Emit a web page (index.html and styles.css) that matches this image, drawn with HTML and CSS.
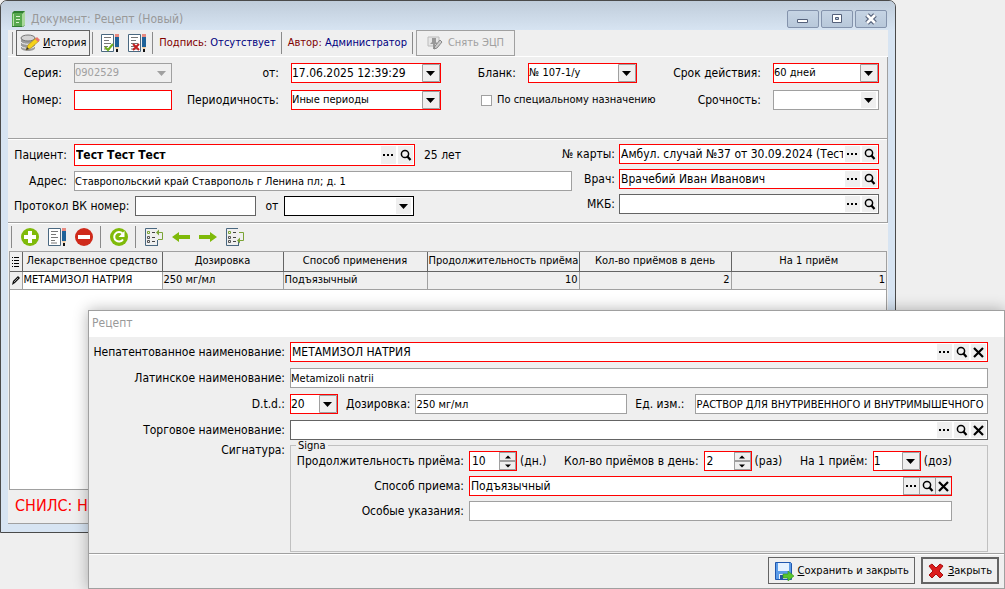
FILE: index.html
```html
<!DOCTYPE html>
<html lang="ru">
<head>
  <meta charset="UTF-8" />
  <meta name="viewport" content="width=device-width, initial-scale=1.0" />
  <title>Документ: Рецепт (Новый)</title>
  <link rel="stylesheet" href="styles.css">
</head>
<body>
  <svg class="sprite" aria-hidden="true">
    <symbol id="i-dots" viewBox="0 0 15 16"><path d="M2 7h2v2H2zM6 7h2v2H6zM10 7h2v2h-2z"/></symbol>
    <symbol id="i-search" viewBox="0 0 15 16"><circle cx="7" cy="7" r="3.6" fill="none" stroke="#000" stroke-width="1.5"/><path d="M9 9l3.500 4" stroke="#000" stroke-width="2.2"/></symbol>
    <symbol id="i-clear" viewBox="0 0 15 16"><path d="M3 4l9 9M12 4l-9 9" stroke="#000" stroke-width="2.2"/></symbol>
    <symbol id="i-up" viewBox="0 0 14 8"><path d="M4 5.500h6l-3-3z"/></symbol>
    <symbol id="i-down" viewBox="0 0 14 8"><path d="M4 2.500h6l-3 3z"/></symbol>
    <symbol id="i-page" viewBox="0 0 20 20">
      <path d="M1.500 1.500h12v17h-12z" fill="#fff" stroke="#4a6880"/>
      <path d="M4 4.500h7M4 7.500h5M4 10.500h7M4 13.500h4M4 16h6" stroke="#777"/>
      <path d="M15 4h4v10h-4z" fill="#1f6299"/><path d="M15 1h4v3h-4z" fill="#e88a80"/>
      <path d="M15 14h4l-1 2h-2z" fill="#f3cfa5"/><path d="M16 16h2v3h-2z" fill="#111"/>
    </symbol>
    <symbol id="i-tree" viewBox="0 0 20 20">
      <path d="M13 1.500H1.500v17H13" fill="none" stroke="#4a6880"/>
      <path d="M13.500 13v6" stroke="#4a6880"/>
      <path d="M3.500 4.500h2v2h-2z" fill="none" stroke="#7ba436"/>
      <path d="M3.500 9.500h2v2h-2zM3.500 13.500h2v2h-2z" fill="none" stroke="#555"/>
      <path d="M8 5.500h3M8 10.500h3M8 14.500h3" stroke="#444"/>
    </symbol>
    <symbol id="i-arrow" viewBox="0 0 20 14"><path d="M1 7l7-5v3h11v4H8v3z" fill="#7fba0a"/></symbol>
  </svg>

  <main class="window">
    <header class="titlebar">
      <svg class="book" width="15" height="16" viewBox="0 0 15 16"><path d="M1 2l2-2h11v14l-2 2H1z" fill="#2f7d32"/><path d="M1 2h10v13H1z" fill="#57a84f"/><path d="M11 3l3-3v14l-3 2z" fill="#a9d89c"/><path d="M5 5.500h4M5 8.500h4M5 11.500h3" stroke="#d8f2cf"/><path d="M2.500 3v12" stroke="#b2dfa6"/></svg>
      <h1>Документ: Рецепт (Новый)</h1>
      <div class="window-buttons">
        <button aria-label="Свернуть"><svg width="14" height="12" viewBox="0 0 14 12"><path d="M1.500 6.500h10v3h-10z" fill="#fff" stroke="#54607a"/></svg></button>
        <button aria-label="Развернуть"><svg width="14" height="12" viewBox="0 0 14 12"><path d="M2.500 1.500h9v8h-9z" fill="#fff" stroke="#54607a"/><path d="M5.500 4.500h3v2h-3z" fill="#b6c7da" stroke="#54607a"/></svg></button>
        <button aria-label="Закрыть окно"><svg width="14" height="12" viewBox="0 0 14 12"><path d="M3 2l8 8M11 2l-8 8" stroke="#54607a" stroke-width="5"/><path d="M3 2l8 8M11 2l-8 8" stroke="#fff" stroke-width="2.6"/></svg></button>
      </div>
    </header>

    <div class="client">
      <div class="toolbar">
        <i class="sep"></i>
        <button class="tool history">
          <svg width="20" height="18" viewBox="0 0 20 18"><path d="M1 4v10c0 4 14 4 14 0V4z" fill="#9b9b9b"/><path d="M1 8c1 3 13 3 14 0M1 12c1 3 13 3 14 0" fill="none" stroke="#f4f4f4"/><ellipse cx="8" cy="4" rx="7" ry="3" fill="#d4d4d4" stroke="#777"/><path d="M6 16l2-5 8-7 3 3-8 7z" fill="#f5d21a" stroke="#a98318" stroke-width=".6"/><path d="M15 5l2-2 3 3-2 2z" fill="#e9756b"/><path d="M6 16l1-3 2 2z" fill="#333"/></svg>
          <span><u>И</u>стория</span>
        </button>
        <i class="sep"></i>
        <button class="icon-btn" aria-label="Подписать"><svg width="20" height="20"><use href="#i-page"/><path d="M5 14l3 3 5-6" fill="none" stroke="#6fae1d" stroke-width="2"/></svg></button>
        <button class="icon-btn" aria-label="Снять подпись"><svg width="20" height="20"><use href="#i-page"/><path d="M6 11l6 6M12 11l-6 6" stroke="#c21f1f" stroke-width="2"/></svg></button>
        <i class="sep"></i>
        <span class="status"><b>Подпись:</b> Отсутствует</span>
        <i class="sep"></i>
        <span class="status"><b>Автор:</b> Администратор</span>
        <i class="sep"></i>
        <button class="tool unsign" disabled>
          <svg width="16" height="16" viewBox="0 0 16 16"><path d="M1 2h11v9H1z" fill="#e6e6e6" stroke="#bbb"/><path d="M5 3h4v4l2 2H3l2-2zM6 9h2v5H6z" fill="#999"/><path d="M7 14l1-3 5-6 2 2-5 6z" fill="#ccc" stroke="#888"/></svg>
          <span>Снять ЭЦП</span>
        </button>
      </div>

      <section class="panel document">
        <label for="series">Серия:</label>
        <select id="series" class="combo" disabled><option>0902529</option></select>
        <label for="date">от:</label>
        <select id="date" class="combo boxed required large"><option>17.06.2025 12:39:29</option></select>
        <label for="blank">Бланк:</label>
        <select id="blank" class="combo boxed required"><option>№ 107-1/у</option></select>
        <label for="term">Срок действия:</label>
        <select id="term" class="combo boxed required"><option>60 дней</option></select>

        <label for="number">Номер:</label>
        <input id="number" class="required" type="text">
        <label for="period">Периодичность:</label>
        <select id="period" class="combo boxed required"><option>Иные периоды</option></select>
        <label class="check"><input type="checkbox"> По специальному назначению</label>
        <label class="urgency" for="urgency">Срочность:</label>
        <select id="urgency" class="combo"><option></option></select>
      </section>

      <section class="panel patient">
        <div class="patient-left">
          <div class="line">
            <label class="short" for="patient">Пациент:</label>
            <div class="lookup required patient-name">
              <input id="patient" type="text" value="Тест Тест Тест">
              <button aria-label="Выбрать пациента"><svg><use href="#i-dots"/></svg></button>
              <button aria-label="Найти пациента"><svg><use href="#i-search"/></svg></button>
            </div>
            <span class="age">25 лет</span>
          </div>
          <div class="line">
            <label class="short" for="address">Адрес:</label>
            <input id="address" class="grow" type="text" value="Ставропольский край Ставрополь г Ленина пл; д. 1">
          </div>
          <div class="line protocol">
            <label for="protocol">Протокол ВК номер:</label>
            <input id="protocol" class="dark" type="text">
            <label for="protocol-date">от</label>
            <select id="protocol-date" class="combo black"><option></option></select>
          </div>
        </div>
        <div class="patient-right">
          <label for="card">№ карты:</label>
          <div class="lookup required">
            <input id="card" type="text" value="Амбул. случай №37 от 30.09.2024 (Тест)">
            <button aria-label="Выбрать карту"><svg><use href="#i-dots"/></svg></button>
            <button aria-label="Найти карту"><svg><use href="#i-search"/></svg></button>
          </div>
          <label for="doctor">Врач:</label>
          <div class="lookup required">
            <input id="doctor" type="text" value="Врачебий Иван Иванович">
            <button aria-label="Выбрать врача"><svg><use href="#i-dots"/></svg></button>
            <button aria-label="Найти врача"><svg><use href="#i-search"/></svg></button>
          </div>
          <label for="mkb">МКБ:</label>
          <div class="lookup dark">
            <input id="mkb" type="text">
            <button aria-label="Выбрать МКБ"><svg><use href="#i-dots"/></svg></button>
            <button aria-label="Найти МКБ"><svg><use href="#i-search"/></svg></button>
          </div>
        </div>
      </section>

      <div class="toolbar grid-tools">
        <i class="sep"></i>
        <button class="icon-btn" aria-label="Добавить"><svg width="20" height="20"><circle cx="10" cy="10" r="9" fill="#7fba0a"/><path d="M10 4v12M4 10h12" stroke="#fff" stroke-width="4"/></svg></button>
        <button class="icon-btn" aria-label="Изменить"><svg width="20" height="20"><use href="#i-page"/></svg></button>
        <button class="icon-btn" aria-label="Удалить"><svg width="20" height="20"><circle cx="10" cy="10" r="9" fill="#cf2a1b"/><path d="M4 10h12" stroke="#fff" stroke-width="4"/></svg></button>
        <i class="sep"></i>
        <button class="icon-btn" aria-label="Обновить"><svg width="20" height="20"><circle cx="10" cy="10" r="9" fill="#7fba0a"/><path d="M14 12.500a4.800 4.800 0 1 1-.5-6" fill="none" stroke="#fff" stroke-width="2"/><path d="M15.500 4v6h-6z" fill="#fff"/></svg></button>
        <i class="sep"></i>
        <button class="icon-btn" aria-label="Первая запись"><svg width="20" height="20"><use href="#i-tree"/><path d="M14 12.500h4.500v-7H14" fill="none" stroke="#7ba436"/><path d="M12 5.500l3-3v6z" fill="#7ba436"/></svg></button>
        <button class="icon-btn" aria-label="Предыдущая запись"><svg width="20" height="14"><use href="#i-arrow"/></svg></button>
        <button class="icon-btn" aria-label="Следующая запись"><svg class="flip" width="20" height="14"><use href="#i-arrow"/></svg></button>
        <button class="icon-btn" aria-label="Последняя запись"><svg width="20" height="20"><use href="#i-tree"/><path d="M14 5.500h4.500v8H14" fill="none" stroke="#7ba436"/><path d="M12 13.500l3-3v6z" fill="#7ba436"/></svg></button>
      </div>

      <div class="table-box">
        <table>
          <colgroup><col class="c-mark"><col class="c-name"><col class="c-dose"><col class="c-way"><col class="c-days"><col class="c-days"><col></colgroup>
          <thead>
            <tr>
              <th><svg width="9" height="13" viewBox="0 0 9 13"><path d="M1 2.500h1M3 2.500h5M1 5.500h1M3 5.500h5M1 8.500h1M3 8.500h5M1 11.500h1M3 11.500h5" stroke="#000"/></svg></th>
              <th>Лекарственное средство</th>
              <th>Дозировка</th>
              <th>Способ применения</th>
              <th>Продолжительность приёма</th>
              <th>Кол-во приёмов в день</th>
              <th>На 1 приём</th>
            </tr>
          </thead>
          <tbody>
            <tr>
              <td class="mark"><svg width="10" height="11" viewBox="0 0 10 11"><path d="M1 10l1-4 5-5 2 2-5 5z" fill="#111"/><path d="M3 7l4-4" stroke="#999"/></svg></td>
              <td class="current">МЕТАМИЗОЛ НАТРИЯ</td>
              <td>250 мг/мл</td>
              <td>Подъязычный</td>
              <td class="num">10</td>
              <td class="num">2</td>
              <td class="num">1</td>
            </tr>
          </tbody>
        </table>
      </div>
      <footer class="snils">СНИЛС: Н</footer>
    </div>
  </main>

  <section class="dialog" role="dialog" aria-labelledby="dialog-title">
    <h2 id="dialog-title">Рецепт</h2>
    <div class="form">
      <label for="inn">Непатентованное наименование:</label>
      <div class="lookup required">
        <input id="inn" type="text" value="МЕТАМИЗОЛ НАТРИЯ">
        <button aria-label="Выбрать наименование"><svg><use href="#i-dots"/></svg></button>
        <button aria-label="Найти наименование"><svg><use href="#i-search"/></svg></button>
        <button aria-label="Очистить наименование"><svg><use href="#i-clear"/></svg></button>
      </div>

      <label for="latin">Латинское наименование:</label>
      <input id="latin" type="text" value="Metamizoli natrii">

      <label for="dtd">D.t.d.:</label>
      <div class="line dose-line">
        <select id="dtd" class="combo boxed required large count"><option>20</option></select>
        <label for="dose">Дозировка:</label>
        <input id="dose" type="text" value="250 мг/мл">
        <label for="unit">Ед. изм.:</label>
        <input id="unit" type="text" value="РАСТВОР ДЛЯ ВНУТРИВЕННОГО И ВНУТРИМЫШЕЧНОГО ВВЕДЕНИЯ">
      </div>

      <label for="trade">Торговое наименование:</label>
      <div class="lookup dark">
        <input id="trade" type="text">
        <button aria-label="Выбрать торговое наименование"><svg><use href="#i-dots"/></svg></button>
        <button aria-label="Найти торговое наименование"><svg><use href="#i-search"/></svg></button>
        <button aria-label="Очистить торговое наименование"><svg><use href="#i-clear"/></svg></button>
      </div>

      <span class="caption">Сигнатура:</span>
      <fieldset>
        <legend>Signa</legend>
        <div class="signa">
          <label for="days">Продолжительность приёма:</label>
          <div class="line">
            <div class="spin required">
              <input id="days" type="text" value="10">
              <span><button aria-label="Больше дней"><svg><use href="#i-up"/></svg></button><button aria-label="Меньше дней"><svg><use href="#i-down"/></svg></button></span>
            </div>
            <span class="unit">(дн.)</span>
            <label for="times">Кол-во приёмов в день:</label>
            <div class="spin required">
              <input id="times" type="text" value="2">
              <span><button aria-label="Больше раз"><svg><use href="#i-up"/></svg></button><button aria-label="Меньше раз"><svg><use href="#i-down"/></svg></button></span>
            </div>
            <span class="unit">(раз)</span>
            <label for="once">На 1 приём:</label>
            <select id="once" class="combo boxed required large count"><option>1</option></select>
            <span class="unit">(доз)</span>
          </div>

          <label for="way">Способ приема:</label>
          <div class="lookup required framed">
            <input id="way" type="text" value="Подъязычный">
            <button aria-label="Выбрать способ"><svg><use href="#i-dots"/></svg></button>
            <button aria-label="Найти способ"><svg><use href="#i-search"/></svg></button>
            <button aria-label="Очистить способ"><svg><use href="#i-clear"/></svg></button>
          </div>

          <label for="notes">Особые указания:</label>
          <input id="notes" type="text">
        </div>
      </fieldset>
    </div>
    <footer class="actions">
      <button class="save">
        <svg width="20" height="20" viewBox="0 0 20 20"><path d="M1.500 1.500h15l1 1v16h-16z" fill="#5b9be8" stroke="#1f56ad"/><path d="M4 2h11v8H4z" fill="#e4f1ff"/><path d="M5 13h8v5H5z" fill="#e8ecf1"/><path d="M6 14h3v4H6z" fill="#24559f"/><path d="M9 13h5v-3l6 5-6 5v-3H9z" fill="#58c52f" stroke="#319417" stroke-width=".6"/></svg>
        <span><u>С</u>охранить и закрыть</span>
      </button>
      <button class="close">
        <svg width="16" height="16" viewBox="0 0 16 16"><path d="M1 3l3-2 4 4 4-4 3 2-4 5 4 4-3 3-4-4-4 4-3-3 4-4z" fill="#dc1c1c" stroke="#a80e0e"/></svg>
        <span><u>З</u>акрыть</span>
      </button>
    </footer>
  </section>
</body>
</html>
```

FILE: styles.css
```css
* {
  box-sizing: border-box;
}

body {
  margin: 0;
  height: 100vh;
  overflow: hidden;
  position: relative;
  background: #efefef;
  color: #000;
  font-family: "DejaVu Sans Condensed", Tahoma, sans-serif;
  font-size: 12px;
  line-height: 16px;
}

h1, h2 {
  margin: 0;
  font-size: 12px;
  font-weight: normal;
  color: #999;
}

.sprite {
  display: none;
}

button, input, select {
  font: inherit;
  color: inherit;
  margin: 0;
  border-radius: 0;
}

button {
  padding: 0;
  border: none;
  background: #efefef;
  display: flex;
  align-items: center;
  justify-content: center;
}

label {
  white-space: nowrap;
}

/* windows */

.window {
  position: absolute;
  inset: 0 109px 56px 0;
  display: flex;
  flex-direction: column;
  padding: 0 7px 8px;
  background: #d7e4f2;
  border: 1px solid #4a4a4a;
  border-radius: 7px 7px 0 0;
}

.titlebar {
  display: flex;
  align-items: center;
  height: 29px;
  margin: 0 -7px;
  padding: 6px 8px 0 10px;
  gap: 5px;
  flex: none;
  border-radius: 6px 6px 0 0;
  background: linear-gradient(#bfccda, #d7e4f2);
}

.window-buttons {
  display: flex;
  gap: 2px;
  margin-left: auto;
}

.window-buttons button {
  width: 32px;
  height: 18px;
  border: 1px solid #8493ac;
  border-radius: 2px;
  background: linear-gradient(#c6d4e4, #b8c8da);
}

.client {
  flex: 1;
  display: flex;
  flex-direction: column;
  background: #efefef;
  min-height: 0;
}

.toolbar {
  display: flex;
  align-items: center;
  height: 27px;
  padding-left: 2px;
  border-bottom: 1px solid #fff;
  flex: none;
  font-size: 11px;
}

.sep {
  width: 1px;
  height: 22px;
  margin: 0 3px 0 2px;
  background: #8a8a8a;
}

.tool {
  height: 26px;
  gap: 3px;
  padding: 0 3px;
  border: 1px solid #646464;
}

.unsign {
  gap: 5px;
  padding: 0 10px;
  color: #a0a0a0;
  border-color: #a0a0a0;
}

.icon-btn {
  width: 27px;
  height: 22px;
}

.icon-btn svg {
  flex: none;
}

.flip {
  transform: scaleX(-1);
}

.status {
  padding: 0 3px;
  color: #000080;
}

.status b {
  font-weight: normal;
  color: #800000;
}

/* fields */

input[type="text"], .combo, .lookup, .spin {
  height: 20px;
  min-width: 0;
  padding: 0;
  background-color: #fff;
  border: 1px solid #a0a0a0;
  font-size: 11px;
}

.combo {
  appearance: none;
  padding: 0 18px 0 0;
  opacity: 1;
  background-repeat: no-repeat;
  background-position: right center;
  background-image: url("data:image/svg+xml,%3Csvg xmlns='http://www.w3.org/2000/svg' width='18' height='18'%3E%3Cpath d='M1 1h15v16H1z' fill='%23efefef'/%3E%3Cpath d='M4 7h9l-4.500 5z'/%3E%3C/svg%3E");
}

.combo.boxed {
  background-image: url("data:image/svg+xml,%3Csvg xmlns='http://www.w3.org/2000/svg' width='18' height='18'%3E%3Cpath d='M.5.5h17v17H.5z' fill='%23efefef' stroke='%23a0a0a0'/%3E%3Cpath d='M4 7h9l-4.500 5z'/%3E%3C/svg%3E");
}

.combo:disabled {
  color: #a0a0a0;
  background-color: #efefef;
  background-image: url("data:image/svg+xml,%3Csvg xmlns='http://www.w3.org/2000/svg' width='18' height='18'%3E%3Cpath d='M4 7h9l-4.500 5z' fill='%23a0a0a0'/%3E%3C/svg%3E");
}

.combo.large {
  font-size: 12px;
}

.lookup {
  display: flex;
  gap: 2px;
  padding: 1px;
  font-size: 12px;
}

.lookup input[type="text"], .spin input[type="text"] {
  flex: 1;
  height: auto;
  border: none;
  font-size: 12px;
}

.lookup button {
  width: 15px;
  flex: none;
}

.lookup svg {
  width: 15px;
  height: 16px;
}

.lookup.framed {
  gap: 0;
  padding: 0 0 0 1px;
}

.framed button {
  width: 16px;
  border: 1px solid #a0a0a0;
  border-right: none;
}

.spin {
  display: flex;
  width: 48px;
  padding: 0 0 0 2px;
}

.spin span {
  display: flex;
  flex-direction: column;
  width: 17px;
}

.spin button {
  height: 9px;
  border: 1px solid #a0a0a0;
}

.spin svg {
  width: 14px;
  height: 8px;
  flex: none;
}

input[type="text"].dark, .dark {
  border-color: #646464;
}

.combo.black {
  border-color: #000;
}

input[type="text"].required, .combo.required, .required {
  border-color: #f00;
}

.line {
  display: flex;
  align-items: center;
}

/* document panels */

.panel {
  border-bottom: 1px solid #a0a0a0;
  border-right: 1px solid #a0a0a0;
  box-shadow: 0 1px #fff;
}

.document {
  display: grid;
  grid-template-columns: 54px 98px 95px 150px 63px 109px 1fr 106px;
  gap: 7px 12px;
  align-items: center;
  padding: 6px 8px 28px 0;
}

.document > label {
  text-align: right;
}

.document .check {
  grid-column: 5 / 7;
  display: flex;
  align-items: center;
  gap: 5px;
  padding-left: 28px;
  font-size: 11px;
}

.check input {
  appearance: none;
  width: 11px;
  height: 11px;
  flex: none;
  background: #fff;
  border: 1px solid #a0a0a0;
}

.patient {
  display: flex;
  padding: 5px 8px 6px 6px;
}

.patient-left {
  flex: 1;
  display: flex;
  flex-direction: column;
  gap: 5px;
}

.short {
  width: 53px;
  margin-right: 7px;
  text-align: right;
}

.patient-name {
  height: 22px;
  width: 341px;
}

.patient-name input[type="text"] {
  font-weight: bold;
}

.age {
  margin-left: 9px;
}

.grow {
  flex: 1;
}

.protocol label + input {
  width: 121px;
  margin: 0 9px 0 6px;
}

.protocol .combo {
  width: 130px;
  margin-left: 6px;
}

.patient-right {
  width: 307px;
  display: grid;
  grid-template-columns: minmax(0, 1fr) 260px;
  gap: 5px 4px;
  align-items: center;
  align-content: start;
}

/* the long label reaches over the free space beside the age */
.patient-right label {
  justify-self: end;
}

.grid-tools {
  height: 28px;
  padding-left: 0;
  border: none;
}

.grid-tools .sep {
  margin: 0 4px 0 3px;
}

.table-box {
  flex: 1;
  margin: 0 1px;
  background: #fff;
  border: 1px solid #a0a0a0;
}

table {
  width: 100%;
  table-layout: fixed;
  border-collapse: collapse;
  font-size: 11px;
}

.c-mark {
  width: 12px;
}

.c-name {
  width: 140px;
}

.c-dose {
  width: 121px;
}

.c-way {
  width: 144px;
}

.c-days {
  width: 152px;
}

th, td {
  height: 18px;
  padding: 0 1px;
  line-height: 16px;
  font-weight: normal;
  text-align: left;
  white-space: nowrap;
  background: #efefef;
  border-right: 1px solid #a0a0a0;
  border-bottom: 1px solid #a0a0a0;
}

th {
  height: 19px;
  text-align: center;
  border-color: #646464;
}

th:last-child, td:last-child {
  border-right: none;
}

th:first-child, td:first-child {
  padding: 0;
}

th svg, td svg {
  display: block;
  margin: auto;
}

td.current {
  background: #fff;
}

td.num {
  text-align: right;
}

.snils {
  height: 34px;
  padding: 8px 7px;
  color: #f00;
  font-size: 16px;
  border-bottom: 1px solid #a0a0a0;
}

/* prescription dialog */

.dialog {
  position: absolute;
  inset: 310px 0 0 88px;
  display: flex;
  flex-direction: column;
  background: #efefef;
  border: 1px solid #a0a0a0;
  box-shadow: 0 0 14px rgba(0, 0, 0, 0.3);
}

.dialog h2 {
  height: 26px;
  padding: 4px 3px;
  background: #fff;
}

.form {
  flex: 1;
  display: grid;
  grid-template-columns: 196px 1fr;
  grid-template-rows: 20px 20px 20px 20px 1fr;
  gap: 6px 5px;
  padding: 5px 16px 1px 0;
}

.form > label {
  padding-top: 2px;
  text-align: right;
}

.caption {
  margin-top: -4px;
  text-align: right;
}

.count {
  width: 48px;
}

.dose-line label {
  margin: 0 5px 0 8px;
}

.dose-line #dose {
  flex: 211;
}

.dose-line #unit {
  flex: 292;
  margin-left: 6px;
}

fieldset {
  min-width: 0;
  margin: -6px 0 0;
  padding: 0 35px 0 5px;
  border: 1px solid #c0c0c0;
}

legend {
  height: 11px;
  padding: 0 2px;
  font-size: 11px;
  line-height: 11px;
}

.signa {
  display: grid;
  grid-template-columns: 168px 1fr;
  gap: 5px;
}

.signa > label {
  padding-top: 2px;
  justify-self: end;
}

.signa .line label {
  margin: 0 5px 0 auto;
}

.unit {
  margin-left: 3px;
}

.actions {
  display: flex;
  justify-content: flex-end;
  gap: 6px;
  padding: 3px 5px 4px;
  border-top: 1px solid #a0a0a0;
  box-shadow: inset 0 1px #fff;
  font-size: 11px;
}

.actions button {
  height: 27px;
  gap: 4px;
  padding: 0 5px;
  border: 1px solid #646464;
}

.actions .close {
  border-width: 2px;
}
```
